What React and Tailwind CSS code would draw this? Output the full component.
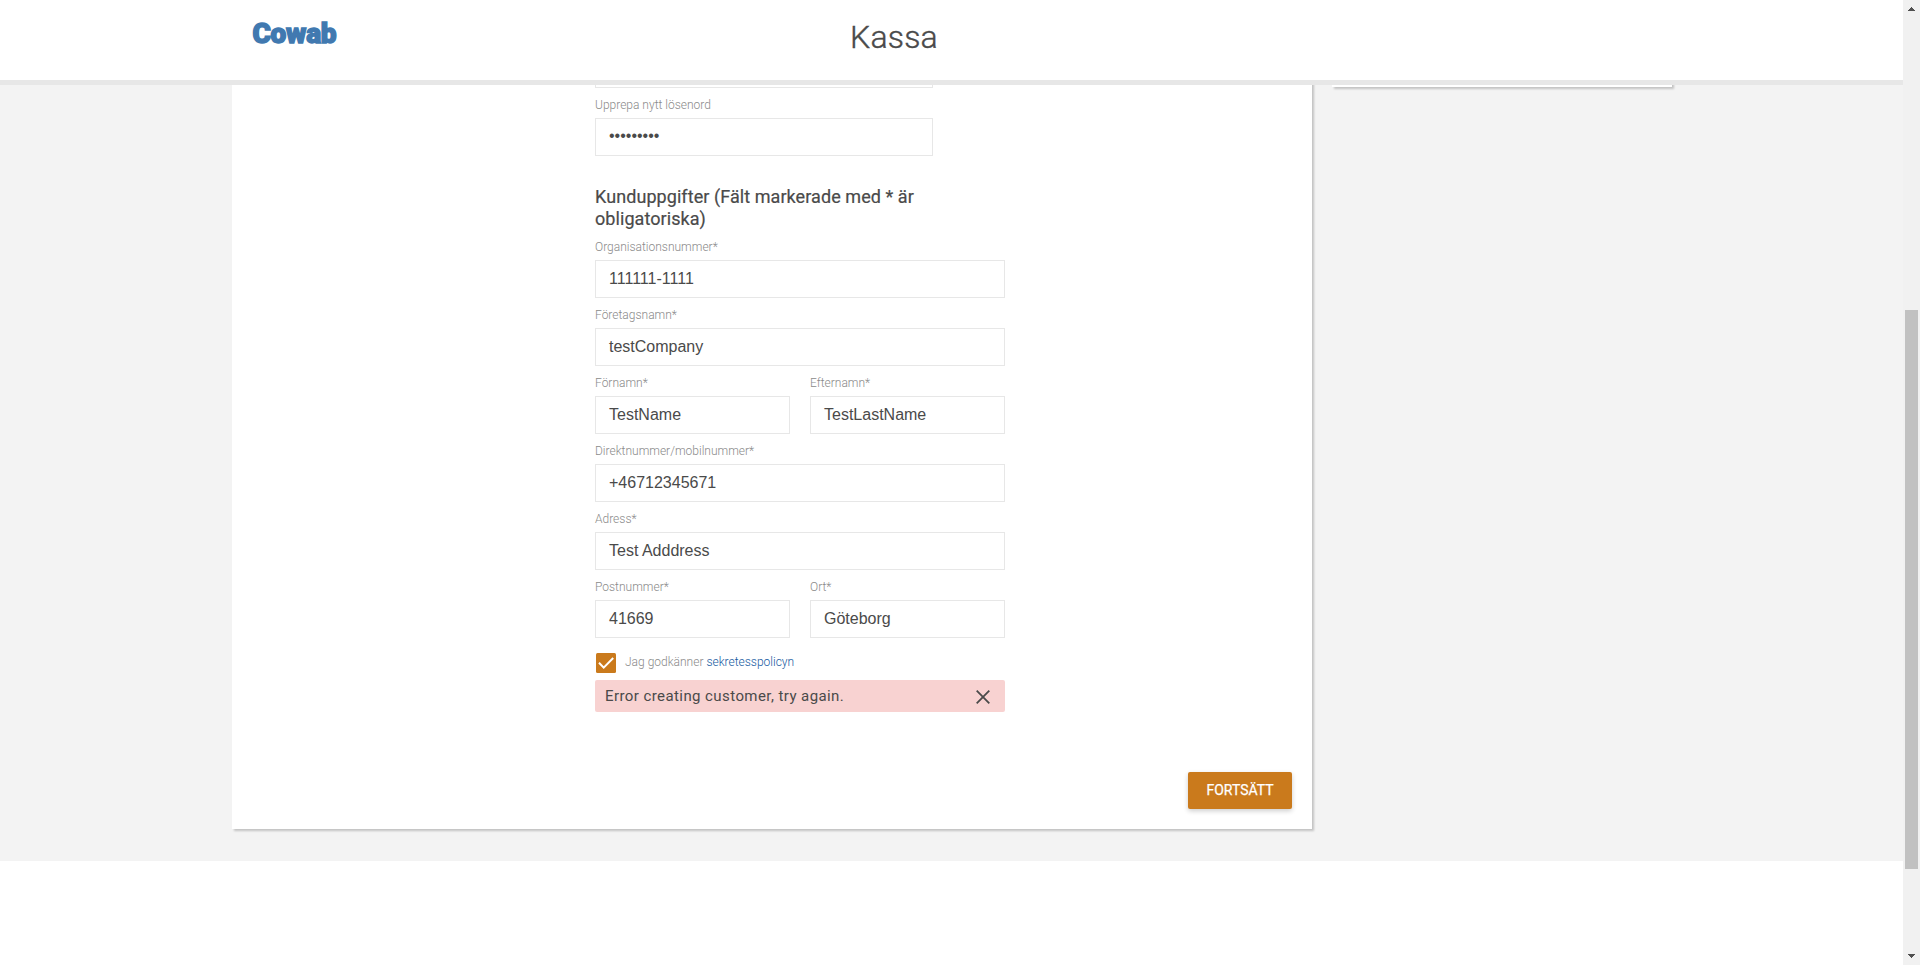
import React from "react";

function Field({ label, value, className = "" }) {
  return (
    <label className={`flex flex-col ${className}`}>
      <span className="h-[30px] pt-[8px] text-[12px] leading-[18px] font-light text-[#8a8a8a]">{label}</span>
      <span className="flex h-[38px] items-center border border-[#e7e7e7] bg-white pl-[13px] pb-px font-['Liberation_Sans',sans-serif] text-[16px] text-[#4a4a4a]">
        {value}
      </span>
    </label>
  );
}

function Header() {
  return (
    <header className="flex h-[85px] shrink-0 border-b-[5px] border-[#e7e7e7] bg-white pl-[242px]">
      <svg className="mt-[10px] h-[48px] w-[110px] shrink-0" viewBox="0 0 110 48">
        <text
          x="10.5"
          y="33.2"
          textLength="84"
          lengthAdjust="spacing"
          fontFamily="Roboto,sans-serif"
          fontWeight="900"
          fontSize="28"
          fill="#4179b0"
          stroke="#4179b0"
          strokeWidth="1.4"
        >
          Cowab
        </text>
      </svg>
      <h1 className="ml-[498px] mt-[17px] text-[32px] leading-[40px] font-light tracking-[0.2px] text-[#4a4a4a] [-webkit-text-stroke:0.4px_#4a4a4a]">Kassa</h1>
    </header>
  );
}

function Scrollbar() {
  return (
    <div className="flex h-full w-[17px] shrink-0 flex-col items-center bg-[#f1f1f1]">
      <svg className="h-[310px] w-[17px]" viewBox="0 0 17 310" shapeRendering="crispEdges">
        <path d="M8 7h1v1h1v1h1v1h1v1H5v-1h1V9h1V8h1z" fill="#505050" />
      </svg>
      <div className="h-[559px] w-[13px] bg-[#c1c1c1]" />
      <svg className="h-[96px] w-[17px]" viewBox="0 0 17 96" shapeRendering="crispEdges">
        <path d="M5 85h7v1h-1v1h-1v1H9v1H8v-1H7v-1H6v-1H5z" fill="#505050" />
      </svg>
    </div>
  );
}

export default function App() {
  return (
    <div className="flex h-[965px] w-[1920px] overflow-hidden bg-white font-[Roboto,sans-serif]">
      <div className="flex min-w-0 flex-1 flex-col">
        <Header />
        <main className="flex h-[776px] items-start gap-[20px] overflow-hidden bg-[#f3f3f3] pl-[232px]">
          <section className="-mt-[20px] flex h-[764px] w-[1080px] flex-col bg-white pt-[20px] pl-[363px] shadow-[2px_2px_2px_0_rgba(0,0,0,0.2)]">
            <div className="h-[3px] w-[338px] border border-t-0 border-[#e7e7e7]" />
            <Field label="Upprepa nytt lösenord" value={<span className="pb-[2px] text-[16px]">•••••••••</span>} className="w-[338px]" />
            <h2 className="mt-[30px] h-[44px] w-[338px] whitespace-nowrap text-[18px] leading-[22px] font-normal tracking-[0.07px] text-[#4a4a4a] [-webkit-text-stroke:0.2px_#4a4a4a]">
              Kunduppgifter (Fält markerade med * är
              <br />
              obligatoriska)
            </h2>
            <div className="grid w-[410px] grid-cols-2 gap-x-[20px]">
              <Field label="Organisationsnummer*" value="111111-1111" className="col-span-2" />
              <Field label="Företagsnamn*" value="testCompany" className="col-span-2" />
              <Field label="Förnamn*" value="TestName" />
              <Field label="Efternamn*" value="TestLastName" />
              <Field label="Direktnummer/mobilnummer*" value="+46712345671" className="col-span-2" />
              <Field label="Adress*" value="Test Adddress" className="col-span-2" />
              <Field label="Postnummer*" value="41669" />
              <Field label="Ort*" value="Göteborg" />
            </div>
            <div className="mt-[15px] flex h-[20px] items-center pl-px">
              <svg className="h-[20px] w-[20px]" viewBox="0 0 20 20">
                <rect width="20" height="20" rx="1.5" fill="#ca7a1c" />
                <path d="M3 9.8l4.7 4.8L17.2 5" fill="none" stroke="#fff" strokeWidth="2" />
              </svg>
              <span className="ml-[9px] pb-[2px] text-[12px] leading-[18px] font-light text-[#8a8a8a]">
                Jag godkänner <a className="text-[#1458a0]">sekretesspolicyn</a>
              </span>
            </div>
            <div className="mt-[7px] flex h-[32px] w-[410px] items-center justify-between rounded-[2px] bg-[#f8d2d1] pl-[10px] pr-[15px] text-[15px] tracking-[0.42px] text-[#4a4a4a]">
              <span>Error creating customer, try again.</span>
              <svg className="mt-[2px] h-[14px] w-[14px]" viewBox="0 0 14 14">
                <path d="M.7.7l12.6 12.6M13.3.7L.7 13.3" stroke="#4a4a4a" strokeWidth="1.8" />
              </svg>
            </div>
            <button className="mt-[60px] mr-[20px] h-[37px] w-[104px] self-end rounded-[2px] bg-[#ca7a1c] text-[14px] font-normal text-white shadow-[0_2px_5px_0_rgba(0,0,0,0.2)] [-webkit-text-stroke:0.25px_#fff]">
              FORTSÄTT
            </button>
          </section>
          <aside className="-mt-[40px] h-[42px] w-[340px] bg-white shadow-[2px_2px_2px_0_rgba(0,0,0,0.2)]" />
        </main>
      </div>
      <Scrollbar />
    </div>
  );
}
